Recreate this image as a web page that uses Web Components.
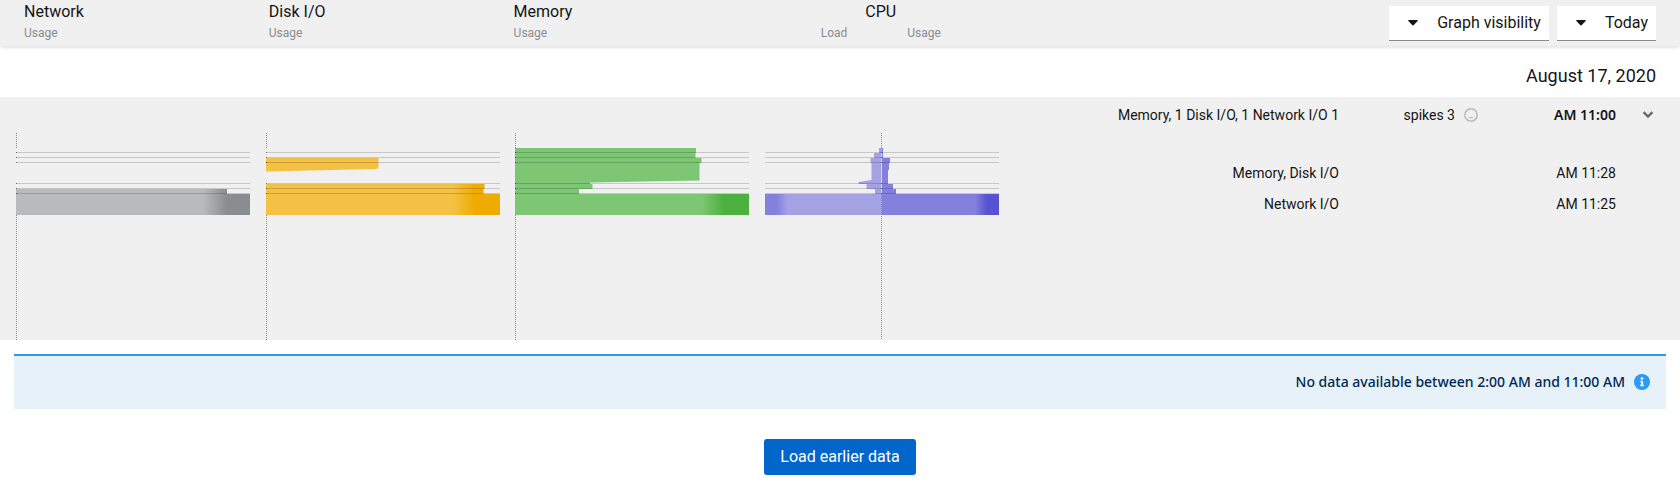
<!DOCTYPE html>
<html lang="en">
<head>
<meta charset="utf-8">
<title>System activity</title>
<style>
  body {
    margin: 0;
    background: #fff;
    color: #151515;
    font-family: Roboto, "Liberation Sans", sans-serif;
    font-size: 14px;
    line-height: 20px;
    --font-strong: "Noto Sans", "Open Sans", sans-serif;
  }
</style>
</head>
<body>
<activity-page>
  <activity-header slot="header">
    <metric-label name="Network"><span>Usage</span></metric-label>
    <metric-label name="Disk I/O"><span>Usage</span></metric-label>
    <metric-label name="Memory"><span>Usage</span></metric-label>
    <metric-label name="CPU" split><span>Load</span><span>Usage</span></metric-label>
    <menu-toggle slot="tools">Graph visibility</menu-toggle>
    <day-select slot="tools"></day-select>
  </activity-header>
  <h2 slot="date">August 17, 2020</h2>
  <activity-hour>
    <usage-chart slot="charts" kind="network"></usage-chart>
    <usage-chart slot="charts" kind="disk"></usage-chart>
    <usage-chart slot="charts" kind="memory"></usage-chart>
    <usage-chart slot="charts" kind="cpu"></usage-chart>
    <event-table></event-table>
  </activity-hour>
  <info-alert>No data available between 2:00 AM and 11:00 AM</info-alert>
  <load-button>Load earlier data</load-button>
</activity-page>

<script>
const define = (name, html, setup) => {
  const template = document.createElement('template');
  template.innerHTML = html;
  customElements.define(name, class extends HTMLElement {
    connectedCallback() {
      if (this.shadowRoot) return;
      const root = this.attachShadow({ mode: 'open' });
      root.append(template.content.cloneNode(true));
      if (setup) setup(this, root);
    }
  });
};

define('activity-page', `
  <style>
    :host { display: block; }
    ::slotted(h2) {
      margin: 0; padding: 16px 24px 8px; text-align: right;
      font-size: 18px; line-height: 27px; font-weight: 400;
    }
  </style>
  <slot name="header"></slot>
  <main><slot name="date"></slot><slot></slot></main>`);

define('activity-header', `
  <style>
    :host { display: block; }
    header {
      display: flex; align-items: flex-start; justify-content: space-between;
      padding: 0 24px 4px; background: #f0f0f0;
      box-shadow: 0 2px 4px -1px rgba(3,3,3,.16);
    }
    .metrics { display: grid; grid-template-columns: repeat(4, 1fr); flex: 0 1 60%; }
    .tools { display: flex; gap: 8px; padding-top: 5px; }
  </style>
  <header>
    <div class="metrics"><slot></slot></div>
    <div class="tools"><slot name="tools"></slot></div>
  </header>`);

define('metric-label', `
  <style>
    :host { display: block; }
    h3 { margin: 0; font-size: 16px; line-height: 24px; font-weight: 400; }
    div { display: flex; color: #8a8d90; font-size: 12px; line-height: 18px; }
    :host([split]) h3 { text-align: center; }
    :host([split]) div { justify-content: center; gap: 60px; }
  </style>
  <h3></h3>
  <div><slot></slot></div>`,
  (host, root) => { root.querySelector('h3').textContent = host.getAttribute('name'); });

define('menu-toggle', `
  <style>
    :host { display: block; }
    button {
      display: flex; align-items: center; gap: 19px; box-sizing: border-box; height: 36px;
      margin: 0; padding: 0 8px 0 19px; background: #fff; color: #151515;
      border: 1px solid #f0f0f0; border-bottom-color: #8a8d90; border-width: 1px 0;
      font: inherit; font-size: 16px; line-height: 24px;
    }
    svg { display: block; width: 10px; height: 6px; fill: #151515; }
  </style>
  <button type="button" aria-haspopup="true">
    <svg viewBox="0 0 10 6" aria-hidden="true"><path d="M.8 0h8.4q.9.4.4 1.1L5.6 5.3q-.6.5-1.2 0L.4 1.1Q-.1.4.8 0z"/></svg>
    <slot></slot>
  </button>`);

define('day-select', `
  <style>
    :host { display: grid; align-items: center; }
    select, svg { grid-area: 1 / 1; }
    select {
      appearance: none; field-sizing: content; box-sizing: border-box; height: 36px;
      margin: 0; padding: 0 8px 0 48px; background: #fff; color: #151515;
      border: 1px solid #f0f0f0; border-bottom-color: #8a8d90; border-width: 1px 0; border-radius: 0;
      font: inherit; font-size: 16px; line-height: 24px;
    }
    svg { width: 10px; height: 6px; margin-left: 19px; fill: #151515; pointer-events: none; }
  </style>
  <select aria-label="Day"><option>Today</option></select>
  <svg viewBox="0 0 10 6" aria-hidden="true"><path d="M.8 0h8.4q.9.4.4 1.1L5.6 5.3q-.6.5-1.2 0L.4 1.1Q-.1.4.8 0z"/></svg>`);

define('activity-hour', `
  <style>
    :host { display: flex; background: #f0f0f0; }
    .charts {
      display: flex; justify-content: space-between; flex: 0 0 auto; width: 58.5%;
      margin: 36px 0 0 16px;
    }
    .events { flex: 1; }
  </style>
  <div class="charts"><slot name="charts"></slot></div>
  <div class="events"><slot></slot></div>`);

const CHARTS = {
  network: {
    title: 'Network usage', axis: 0,
    areas: [{ from: '#b8bbbe', to: '#8a8d90', x1: 187, x2: 211,
      d: 'M0 56H211V61H234V82H0z' }]
  },
  disk: {
    title: 'Disk I/O usage', axis: 0,
    areas: [{ from: '#f4c145', to: '#f0ab00', x1: 187, x2: 209,
      d: 'M0 25H112.5V34L111 36L0 38.5zM0 51H218.5V56H217.5V61H234V82H0z' }]
  },
  memory: {
    title: 'Memory usage', axis: 0,
    areas: [{ from: '#7cc674', to: '#4cb140', x1: 187, x2: 209,
      d: 'M0 15H181V20H180.5V25H186.5V30H184.5V47.5L75 49.5V51H77.5V56H64V61H234V82H0z' }]
  },
  cpu: {
    title: 'CPU load and usage', axis: 116,
    areas: [
      { from: '#8481dd', to: '#a5a2e3', x1: 12, x2: 23,
        d: 'M117 15H114V20H109V25H105.5V30H106.5V47L93.5 49V51H101.5V56H110V61H0V82H117z' },
      { from: '#8481dd', to: '#5752d1', x1: 210, x2: 222,
        d: 'M117 15H118V25H125V30H124V37H123V51H128V56H131V61H234V82H117z' }
    ]
  }
};

define('usage-chart', `
  <style>
    :host { display: block; }
    svg { display: block; width: 234px; height: 207px; }
  </style>
  <svg viewBox="0 0 234 207" role="img"></svg>`,
  (host, root) => {
    const { title, axis, areas } = CHARTS[host.getAttribute('kind')];
    const x = axis + .5;
    const svg = root.querySelector('svg');
    svg.setAttribute('aria-label', title);
    const gradients = areas.map((a, i) => `
      <linearGradient id="g${i}" gradientUnits="userSpaceOnUse" x1="${a.x1}" x2="${a.x2}" y1="0" y2="0">
        <stop stop-color="${a.from}"/><stop offset="1" stop-color="${a.to}"/>
      </linearGradient>`).join('');
    const shapes = areas.map((a, i) => `<path d="${a.d}" fill="url(#g${i})"/>`).join('');
    const rules = [19, 24, 29, 50, 55, 60].map(y => `
      <path d="M0 ${y + .5}H234" stroke="#000" stroke-opacity=".17"/>
      <path d="M${axis} ${y + .5}h1" stroke="#000" stroke-opacity=".45"/>`).join('');
    const lower = axis ? 61 : 82;
    const seam = axis ? `<path d="M${x} 20V61" stroke="#d4d3ee"/>` : '';
    svg.innerHTML = `<defs>${gradients}</defs>${shapes}${seam}${rules}
      <path d="M${x} 0V15M${x} ${lower}V207" stroke="#8a8a8a" stroke-dasharray="1 1"/>`;
  });

define('event-table', `
  <style>
    :host { display: block; }
    table { width: 100%; border-collapse: collapse; }
    th, td { height: 31px; padding: 0; text-align: right; vertical-align: middle; font-weight: 400; white-space: nowrap; }
    thead th { height: 36px; }
    tbody::before { content: ""; display: block; height: 24px; }
    .kind { width: auto; }
    .spikes { width: 139px; }
    .time { width: 138px; }
    .toggle { width: 64px; }
    .count { display: flex; align-items: center; justify-content: flex-end; gap: 9px; }
    thead .time { font-family: var(--font-strong); font-weight: 600; }
    button { display: block; margin: 0 0 0 24px; padding: 2px; border: 0; background: none; }
    svg { display: block; }
  </style>
  <table>
    <thead>
      <tr>
        <th class="kind">Memory, 1 Disk I/O, 1 Network I/O 1</th>
        <th class="spikes"><span class="count">spikes 3
          <svg width="14" height="14" viewBox="0 0 14 14" fill="none" stroke="#b8bbbe" aria-hidden="true">
            <circle cx="7" cy="7" r="6.2" stroke-width="1.5"/>
            <path d="M4 9Q7 11.5 10 9z" stroke="none" fill="#b8bbbe"/>
          </svg></span></th>
        <th class="time">AM 11:00</th>
        <th class="toggle"><button type="button" aria-label="Hide events" aria-expanded="true">
          <svg width="12" height="8" viewBox="0 0 12 8" fill="none" stroke="#6a6e73" stroke-width="2.5" aria-hidden="true"><path d="M1.6 1.2L6 5.6L10.4 1.2"/></svg>
        </button></th>
      </tr>
    </thead>
    <tbody>
      <tr><td>Memory, Disk I/O</td><td></td><td>AM 11:28</td><td></td></tr>
      <tr><td>Network I/O</td><td></td><td>AM 11:25</td><td></td></tr>
    </tbody>
  </table>`);

define('info-alert', `
  <style>
    :host { display: block; margin: 14px 14px 30px; }
    div {
      display: flex; align-items: center; justify-content: flex-end; gap: 9px;
      padding: 15px 16px 17px; border-top: 2px solid #2b9af3; background: #e7f1fa;
      color: #002952; font-family: var(--font-strong); font-weight: 500; line-height: 21px;
    }
    svg { display: block; }
  </style>
  <div role="status">
    <slot></slot>
    <svg width="16" height="16" viewBox="0 0 16 16" aria-hidden="true">
      <circle cx="8" cy="8" r="8" fill="#2b9af3"/>
      <circle cx="8" cy="4.6" r="1.4" fill="#e7f1fa"/>
      <path d="M6.2 6.8h2.9v4h.9v1.4H6.1v-1.4H7V8.2h-.8z" fill="#e7f1fa"/>
    </svg>
  </div>`);

define('load-button', `
  <style>
    :host { display: flex; justify-content: center; }
    button {
      padding: 6px 16px; border: 0; border-radius: 3px; background: #06c; color: #fff;
      font: inherit; font-size: 16px; line-height: 24px;
    }
  </style>
  <button type="button"><slot></slot></button>`);
</script>
</body>
</html>
